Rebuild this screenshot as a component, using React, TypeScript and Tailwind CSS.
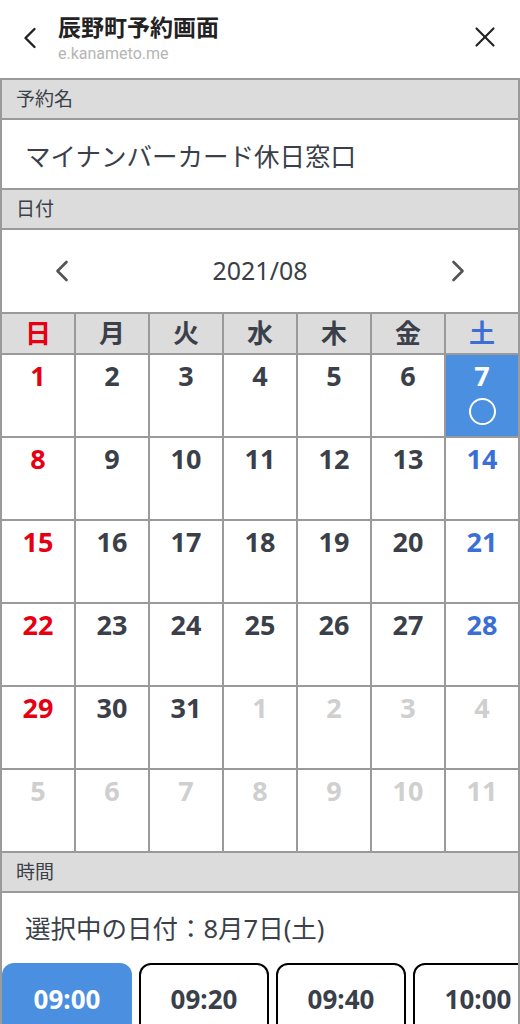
import { ChevronLeft, ChevronRight, X } from "lucide-react";

type Day = { n: number; muted?: boolean; selected?: boolean };

const weekdays = ["日", "月", "火", "水", "木", "金", "土"];

const weeks: Day[][] = [
  [1, 2, 3, 4, 5, 6, 7].map((n) => ({ n, selected: n === 7 })),
  [8, 9, 10, 11, 12, 13, 14].map((n) => ({ n })),
  [15, 16, 17, 18, 19, 20, 21].map((n) => ({ n })),
  [22, 23, 24, 25, 26, 27, 28].map((n) => ({ n })),
  [
    { n: 29 },
    { n: 30 },
    { n: 31 },
    { n: 1, muted: true },
    { n: 2, muted: true },
    { n: 3, muted: true },
    { n: 4, muted: true },
  ],
  [5, 6, 7, 8, 9, 10, 11].map((n) => ({ n, muted: true })),
];

const times = ["09:00", "09:20", "09:40", "10:00"];

function SectionHeader({ label }: { label: string }) {
  return (
    <div className="h-[40px] bg-[#dcdcdc] border-b-2 border-[#9a9a9a] flex items-center pl-[14px] text-[19px] text-[#3a3f4a]">
      {label}
    </div>
  );
}

function dayColor(col: number, d: Day) {
  if (d.muted) return "text-[#cfcfcf]";
  if (d.selected) return "text-white";
  if (col === 0) return "text-[#e60012]";
  if (col === 6) return "text-[#3b6fd6]";
  return "text-[#3a3f4a]";
}

export default function App() {
  return (
    <div className="w-[520px] h-[1024px] overflow-hidden bg-white font-['Noto_Sans','Noto_Sans_CJK_JP',sans-serif]">
      {/* Top bar */}
      <div className="h-[78px] flex items-start">
        <div className="w-[58px] pt-[20px] pl-[12px]">
          <ChevronLeft className="size-[36px] text-[#222]" strokeWidth={1.6} />
        </div>
        <div className="flex-1 pt-[11px]">
          <h1 className="text-[23px] font-bold text-[#222] leading-[32px]">辰野町予約画面</h1>
          <p className="text-[16px] text-[#b5b5b5] leading-[22px] font-['Roboto',sans-serif]">e.kanameto.me</p>
        </div>
        <div className="pt-[20px] pr-[18px]">
          <X className="size-[34px] text-[#222]" strokeWidth={1.5} />
        </div>
      </div>

      {/* Form */}
      <div className="border-x-2 border-t-2 border-[#9a9a9a]">
        <SectionHeader label="予約名" />
        <div className="h-[70px] border-b-2 border-[#9a9a9a] flex items-center pl-[23px] pt-[4px] text-[25.5px] text-[#3a3f4a]">
          マイナンバーカード休日窓口
        </div>
        <SectionHeader label="日付" />

        {/* Month nav */}
        <div className="h-[82px] flex items-center justify-between px-[42px] text-[#555]">
          <ChevronLeft className="size-[36px]" strokeWidth={1.8} />
          <span className="text-[25px] text-[#3a3f4a]">2021/08</span>
          <ChevronRight className="size-[36px]" strokeWidth={1.8} />
        </div>

        {/* Calendar */}
        <div className="grid grid-cols-7 gap-[2px] bg-[#9a9a9a] border-y-2 border-[#9a9a9a]">
          {weekdays.map((w, i) => (
            <div
              key={w}
              className={`h-[39px] bg-[#dcdcdc] flex items-center justify-center text-[26px] font-bold ${
                i === 0 ? "text-[#e60012]" : i === 6 ? "text-[#3b6fd6]" : "text-[#3a3f4a]"
              }`}
            >
              {w}
            </div>
          ))}
          {weeks.flatMap((week, r) =>
            week.map((d, c) => (
              <div
                key={`${r}-${c}`}
                className={`h-[81px] flex flex-col items-center pt-[3px] ${d.selected ? "bg-[#4a8fe0]" : "bg-white"}`}
              >
                <span className={`text-[27px] font-bold leading-[36px] ${dayColor(c, d)}`}>{d.n}</span>
                {d.selected && (
                  <span className="mt-[4px] size-[27px] rounded-full border-[2.5px] border-white" />
                )}
              </div>
            ))
          )}
        </div>

        <SectionHeader label="時間" />
        <div className="h-[68px] flex items-center pl-[23px] text-[25.5px] text-[#3a3f4a] pt-[2px]">
          選択中の日付：8月7日(土)
        </div>

        {/* Time slots */}
        <div className="flex gap-[7px] mt-[2px] overflow-hidden">
          {times.map((t, i) => (
            <button
              key={t}
              className={`shrink-0 w-[130px] h-[72px] rounded-[12px] text-[26px] font-bold flex items-center justify-center ${
                i === 0
                  ? "bg-[#4a8fe0] text-white"
                  : "bg-white border-2 border-black text-[#3a3f4a]"
              }`}
            >
              {t}
            </button>
          ))}
        </div>
      </div>
    </div>
  );
}
